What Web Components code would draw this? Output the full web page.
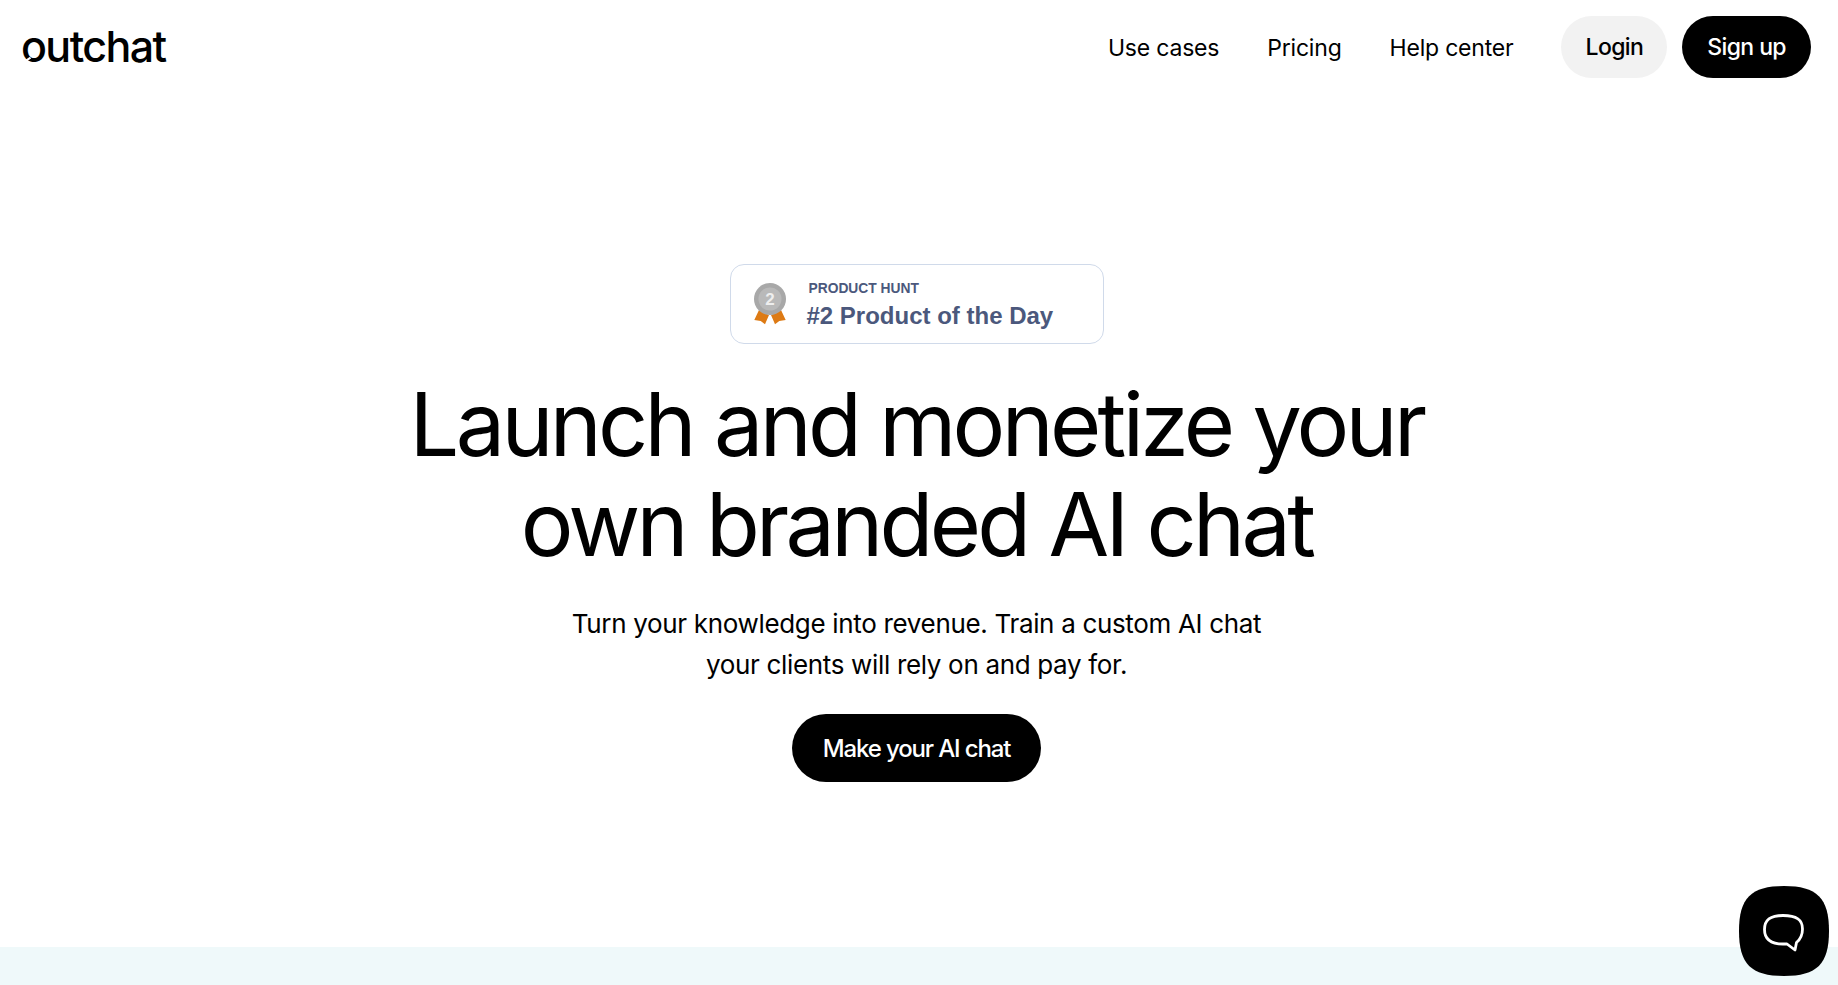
<!DOCTYPE html>
<html lang="en">
<head>
<meta charset="utf-8">
<title>outchat</title>
<style>
  html, body { margin: 0; padding: 0; background: #fff; overflow: hidden; }
  body { height: 985px; font-family: Inter, "Liberation Sans", sans-serif; color: #000; }
</style>
</head>
<body>
<site-nav></site-nav>
<hero-section>
  <ph-badge></ph-badge>
</hero-section>
<feature-band></feature-band>
<chat-launcher></chat-launcher>

<script>
class PillButton extends HTMLElement {
    constructor() {
        super();
        this.attachShadow({ mode: 'open' }).innerHTML = `
            <style>
                :host {
                    display: inline-flex;
                    align-items: center;
                    justify-content: center;
                    height: var(--pill-height, 62px);
                    padding: 0 var(--pill-pad, 25px);
                    border-radius: 34px;
                    font-size: var(--pill-size, 23px);
                    font-weight: 500;
                    letter-spacing: var(--pill-spacing, -0.6px);
                    background: #000;
                    color: #fff;
                    cursor: pointer;
                    white-space: nowrap;
                }
                :host([light]) {
                    background: #f2f2f2;
                    color: #000;
                }
            </style>
            <slot></slot>
        `;
    }
}

class SiteNav extends HTMLElement {
    constructor() {
        super();
        this.attachShadow({ mode: 'open' }).innerHTML = `
            <style>
                :host {
                    display: flex;
                    align-items: center;
                    justify-content: space-between;
                    height: 94px;
                    padding: 0 22px 0 21px;
                    box-sizing: border-box;
                    width: 1833px;
                }
                .logo {
                    position: relative;
                    font-size: 43px;
                    font-weight: 500;
                    letter-spacing: -1.6px;
                    line-height: 1;
                    margin-top: -2px;
                }
                .notch {
                    position: absolute;
                    left: 5px;
                    bottom: 8px;
                    width: 5px;
                    height: 2px;
                    background: #fff;
                    transform: rotate(-35deg);
                }
                .links {
                    display: flex;
                    align-items: center;
                }
                a {
                    color: #000;
                    text-decoration: none;
                    font-size: 23px;
                    letter-spacing: -0.2px;
                    margin-right: 48px;
                    padding-top: 2px;
                }
                pill-button[light] { margin-right: 15px; --pill-pad: 24px; }
            </style>
            <div class="logo">outchat<span class="notch"></span></div>
            <div class="links">
                <a href="#">Use cases</a>
                <a href="#">Pricing</a>
                <a href="#">Help center</a>
                <pill-button light>Login</pill-button>
                <pill-button>Sign up</pill-button>
            </div>
        `;
    }
}

class PhBadge extends HTMLElement {
    constructor() {
        super();
        this.attachShadow({ mode: 'open' }).innerHTML = `
            <style>
                :host {
                    display: flex;
                    align-items: center;
                    width: 374px;
                    height: 80px;
                    box-sizing: border-box;
                    padding-left: 22px;
                    border: 1px solid #d0daea;
                    border-radius: 14px;
                    background: #fff;
                    color: #4b587c;
                    font-family: "Liberation Sans", Arial, sans-serif;
                }
                svg { flex: none; display: block; }
                .text { margin-left: 20px; padding-top: 2px; }
                .small {
                    font-size: 13.8px;
                    font-weight: 700;
                    line-height: 16px;
                    margin-left: 2px;
                }
                .big {
                    font-size: 24px;
                    font-weight: 700;
                    line-height: 28px;
                    margin-top: 5px;
                }
            </style>
            <svg width="34" height="44" viewBox="0 0 34 44">
                <path d="M6 28 L1.3 38 L7.7 39 L12 42.3 L16 33 Z" fill="#dd7a14"/>
                <path d="M28 28 L32.7 38 L26.3 39 L22 42.3 L18 33 Z" fill="#dd7a14"/>
                <circle cx="17" cy="17" r="16" fill="#a8a8a8"/>
                <circle cx="17" cy="17" r="11.5" fill="#b9b9b9"/>
                <text x="17" y="23" text-anchor="middle" font-family="Liberation Sans, sans-serif" font-size="17" font-weight="700" fill="#eeeeee">2</text>
            </svg>
            <div class="text">
                <div class="small">PRODUCT HUNT</div>
                <div class="big">#2 Product of the Day</div>
            </div>
        `;
    }
}

class HeroSection extends HTMLElement {
    constructor() {
        super();
        this.attachShadow({ mode: 'open' }).innerHTML = `
            <style>
                :host {
                    display: flex;
                    flex-direction: column;
                    align-items: center;
                    width: 1833px;
                    padding-top: 170px;
                    box-sizing: border-box;
                    height: 853px;
                }
                h1 {
                    margin: 30px 0 0;
                    font-size: 88px;
                    font-weight: 400;
                    line-height: 100px;
                    letter-spacing: -3.7px;
                    text-align: center;
                }
                p {
                    margin: 29px 0 0;
                    font-size: 26px;
                    line-height: 41px;
                    letter-spacing: -0.33px;
                    text-align: center;
                }
                pill-button {
                    margin-top: 29px;
                    --pill-height: 68px;
                    --pill-pad: 31px;
                    --pill-size: 24px;
                    --pill-spacing: -1.15px;
                }
            </style>
            <slot></slot>
            <h1>Launch and monetize your<br>own branded AI chat</h1>
            <p>Turn your knowledge into revenue. Train a custom AI chat<br>your clients will rely on and pay for.</p>
            <pill-button>Make your AI chat</pill-button>
        `;
    }
}

class FeatureBand extends HTMLElement {
    constructor() {
        super();
        this.attachShadow({ mode: 'open' }).innerHTML = `
            <style>
                :host {
                    display: block;
                    height: 38px;
                    background: #eff9fa;
                }
            </style>
        `;
    }
}

class ChatLauncher extends HTMLElement {
    constructor() {
        super();
        this.attachShadow({ mode: 'open' }).innerHTML = `
            <style>
                :host {
                    position: fixed;
                    right: 9px;
                    bottom: 9px;
                    width: 90px;
                    height: 90px;
                    cursor: pointer;
                }
                svg { display: block; }
            </style>
            <svg width="90" height="90" viewBox="0 0 90 90">
                <path d="M45 0 C78 0 90 12 90 45 C90 78 78 90 45 90 C12 90 0 78 0 45 C0 12 12 0 45 0 Z" fill="#000"/>
                <path d="M44 29.5 C58 29.5 63.5 34 63.5 43 C63.5 49 60.5 54 57.5 56.5 L56 64 L48 58 C46.5 58 45 58 44 58 C31 58 25.5 53 25.5 43.5 C25.5 34 31 29.5 44 29.5 Z" fill="none" stroke="#fff" stroke-width="2.8" stroke-linejoin="round"/>
            </svg>
        `;
    }
}

customElements.define('pill-button', PillButton);
customElements.define('site-nav', SiteNav);
customElements.define('ph-badge', PhBadge);
customElements.define('hero-section', HeroSection);
customElements.define('feature-band', FeatureBand);
customElements.define('chat-launcher', ChatLauncher);
</script>
</body>
</html>
